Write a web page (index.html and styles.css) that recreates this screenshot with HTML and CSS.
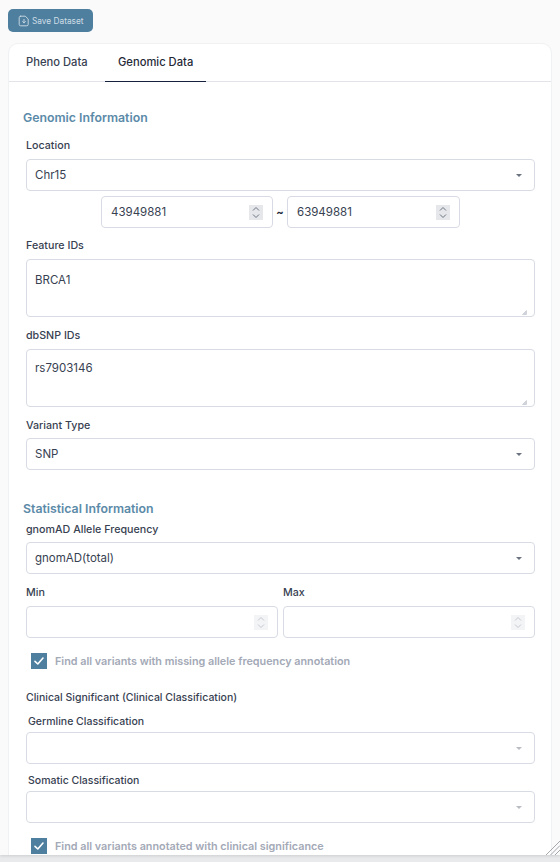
FILE: index.html
```html
<!DOCTYPE html>
<html lang="en">
<head>
<meta charset="utf-8">
<title>Save Dataset</title>
<link rel="stylesheet" href="styles.css">
</head>
<body>
<div class="viewport">
  <div class="toolbar">
    <button class="save-btn" type="button">
      <svg class="save-icon" viewBox="0 0 12 12" width="12" height="12" fill="none" stroke="currentColor" stroke-width="0.9" stroke-linecap="round" stroke-linejoin="round"><path d="M2.6 1.2h4.6l3 2.8v5.4a1.4 1.4 0 0 1-1.4 1.4H2.6a1.4 1.4 0 0 1-1.4-1.4V2.6a1.4 1.4 0 0 1 1.4-1.4z"/><path d="M6 4.4v3.4M4.6 6.5 6 7.9l1.4-1.4"/></svg>
      <span>Save Dataset</span>
    </button>
  </div>
  <div class="card">
    <div class="tabs">
      <div class="tab">Pheno Data</div>
      <div class="tab active">Genomic Data</div>
    </div>
    <div class="body">
      <h2 class="section first">Genomic Information</h2>
      <div class="label l-location">Location</div>
      <div class="control"><span>Chr15</span><i class="caret"></i></div>
      <div class="range">
        <div class="control num"><span>43949881</span><i class="spin"><svg viewBox="0 0 14 15" width="14" height="15" fill="none" stroke="#6b7280" stroke-width="1"><path d="M4 5.5 7 2.5l3 3M4 9.5l3 3 3-3"/></svg></i></div>
        <span class="tilde">~</span>
        <div class="control num"><span>63949881</span><i class="spin"><svg viewBox="0 0 14 15" width="14" height="15" fill="none" stroke="#6b7280" stroke-width="1"><path d="M4 5.5 7 2.5l3 3M4 9.5l3 3 3-3"/></svg></i></div>
      </div>
      <div class="label l-feature">Feature IDs</div>
      <div class="control area"><span>BRCA1</span><svg class="grip" viewBox="0 0 5 5" width="5" height="5"><path d="M0.5 4.5 4.5 0.5V4.5z" fill="#d1d5db" stroke="#b6bac2" stroke-width="0.5"/></svg></div>
      <div class="label l-dbsnp">dbSNP IDs</div>
      <div class="control area tight"><span>rs7903146</span><svg class="grip" viewBox="0 0 5 5" width="5" height="5"><path d="M0.5 4.5 4.5 0.5V4.5z" fill="#d1d5db" stroke="#b6bac2" stroke-width="0.5"/></svg></div>
      <div class="label l-variant">Variant Type</div>
      <div class="control"><span>SNP</span><i class="caret"></i></div>
      <h2 class="section second">Statistical Information</h2>
      <div class="label l-gnomad">gnomAD Allele Frequency</div>
      <div class="control"><span>gnomAD(total)</span><i class="caret"></i></div>
      <div class="minmax">
        <div class="col">
          <div class="label l-min">Min</div>
          <div class="control"><i class="spin faint"><svg viewBox="0 0 14 15" width="14" height="15" fill="none" stroke="#c4c8cf" stroke-width="1"><path d="M4 5.5 7 2.5l3 3M4 9.5l3 3 3-3"/></svg></i></div>
        </div>
        <div class="col">
          <div class="label l-min">Max</div>
          <div class="control"><i class="spin faint"><svg viewBox="0 0 14 15" width="14" height="15" fill="none" stroke="#c4c8cf" stroke-width="1"><path d="M4 5.5 7 2.5l3 3M4 9.5l3 3 3-3"/></svg></i></div>
        </div>
      </div>
      <div class="check c-first">
        <i class="box"><svg viewBox="0 0 16 16" width="16" height="16" fill="none" stroke="#fff" stroke-width="1.6" stroke-linecap="round" stroke-linejoin="round"><path d="M4 8.4 6.8 11 12 5"/></svg></i>
        <span>Find all variants with missing allele frequency annotation</span>
      </div>
      <div class="label l-clinical">Clinical Significant (Clinical Classification)</div>
      <div class="label sub l-germline">Germline Classification</div>
      <div class="control"><i class="caret pale"></i></div>
      <div class="label sub l-somatic">Somatic Classification</div>
      <div class="control"><i class="caret pale"></i></div>
      <div class="check c-second">
        <i class="box"><svg viewBox="0 0 16 16" width="16" height="16" fill="none" stroke="#fff" stroke-width="1.6" stroke-linecap="round" stroke-linejoin="round"><path d="M4 8.4 6.8 11 12 5"/></svg></i>
        <span>Find all variants annotated with clinical significance</span>
      </div>
    </div>
  </div>
  <svg class="resize" viewBox="0 0 14 14" width="14" height="14" stroke="#8f9399" stroke-width="0.8"><path d="M0 14 14 0M4.5 14 14 4.5M9 14 14 9"/></svg>
</div>
</body>
</html>
```
FILE: styles.css
```css
* { box-sizing: border-box; }
html, body { margin: 0; padding: 0; height: 100%; overflow: hidden; background: #e9eaeb; }
body { font-family: "Inter", "Liberation Sans", sans-serif; color: #374151; }
.viewport { position: relative; height: 855px; overflow: hidden; background: #fafafa; padding: 9px 8px 0 8px; box-shadow: 0 1px 3px rgba(0,0,0,.12); }
.toolbar { display: flex; height: 23px; }
.save-btn { display: flex; align-items: center; gap: 1px; height: 23px; width: 85px; padding: 0 0 0 10px; border: 0; border-radius: 5px; background: #4e7f9f; color: #cfdde6; font: 400 8.3px "Inter", sans-serif; }
.save-icon { flex: none; margin-right: 1px; }
.card { margin-top: 11px; height: 830px; background: #fff; border: 1px solid #f0f1f3; border-radius: 10px 10px 0 0; overflow: hidden; }
.tabs { display: flex; height: 38px; border-bottom: 1px solid #e2e4ea; padding-left: 5px; }
.tab { width: 81px; padding: 0 0 0 12px; margin-right: 10px; height: 38px; line-height: 36px; font-size: 11.2px; font-weight: 500; color: #374151; white-space: nowrap; }
.tab.active { width: 101px; color: #1f2937; border-bottom: 1px solid #16213e; padding-left: 13px; }
.body { padding: 0 16px 0 17px; }
.section { margin: 0 0 0 -3px; font-size: 12.3px; font-weight: 600; line-height: 16px; color: #5b8aa8; }
.section.first { margin-top: 28px; }
.section.second { margin-top: 31px; }
.label { font-size: 10.7px; font-weight: 500; line-height: 14px; color: #374151; }
.label.sub { padding-left: 2px; font-size: 10.5px; }
.l-location { margin-top: 13px; margin-bottom: 6px; }
.l-feature { margin-top: 11px; margin-bottom: 6px; }
.l-dbsnp { margin-top: 12px; margin-bottom: 6px; }
.l-variant { margin-top: 12px; margin-bottom: 5px; }
.l-gnomad { margin-top: 6px; margin-bottom: 5px; }
.l-min { margin-bottom: 6px; }
.l-clinical { margin-top: 22px; font-size: 10.5px; }
.l-germline { margin-top: 10px; margin-bottom: 3px; }
.l-somatic { margin-top: 10px; margin-bottom: 3px; }
.control { position: relative; display: flex; align-items: center; height: 32px; padding: 0 8px; background: #fff; border: 1px solid #d8dbe3; border-radius: 4px; font-size: 11.5px; color: #374151; }
.caret { position: absolute; right: 12.5px; top: 13.5px; width: 0; height: 0; border-left: 3.5px solid transparent; border-right: 3.5px solid transparent; border-top: 3.5px solid #6b7280; }
.caret.pale { border-top-color: #b9bcc3; }
.range { display: flex; justify-content: center; align-items: center; margin-top: 5px; }
.range .num { width: 172px; padding: 0 9px; }
.range .num:last-child { width: 173px; }
.tilde { width: 14px; text-align: center; font-size: 11px; font-weight: 700; color: #1f2937; }
.spin { position: absolute; right: 9px; top: 8px; width: 14px; height: 15px; background: #e5e7eb; display: flex; }
.spin.faint { background: #f3f4f6; }
.area { height: 58px; align-items: flex-start; padding-top: 13px; }
.area.tight { padding-top: 11px; }
.grip { position: absolute; right: 7px; bottom: 1px; }
.minmax { display: grid; grid-template-columns: 252px 252px; column-gap: 5px; margin-top: 12px; }
.check { display: flex; align-items: center; gap: 8px; padding-left: 5px; font-size: 10.8px; font-weight: 600; color: #a3a9b6; white-space: nowrap; }
.box { width: 16px; height: 16px; flex: none; background: #4e7f9f; display: flex; }
.c-first { margin-top: 15px; }
.c-second { margin-top: 15px; }
.resize { position: absolute; right: 0; bottom: 0; }
```
